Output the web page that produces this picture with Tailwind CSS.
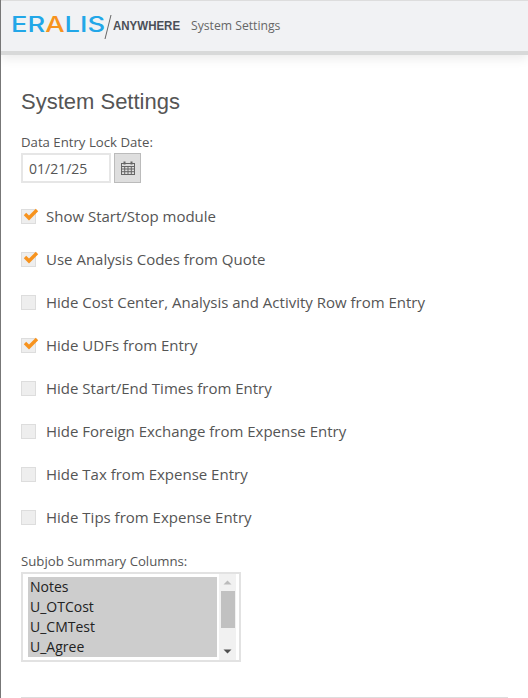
<!DOCTYPE html>
<html lang="en">
<head>
  <meta charset="UTF-8" />
  <meta name="viewport" content="width=device-width, initial-scale=1.0"/>
  <title>System Settings</title>
  <script src="https://cdn.jsdelivr.net/npm/@tailwindcss/browser@4"></script>
</head>
<body class="bg-white h-[698px] overflow-hidden border-l border-[#777] font-['Open_Sans',sans-serif] text-[#555]">
  <!-- header -->
  <header class="h-[55px] bg-[#f1f2f4] border-t border-[#ddd] border-b-[4px] border-b-[#d8d9d9] shadow-[0_4px_10px_rgba(0,0,0,0.08)] flex items-center pl-[10px]">
    <span class="font-['Inter',sans-serif] text-[21px] leading-none font-medium text-[#22a7e8] w-[93px] -mt-[4px] scale-x-[1.3] origin-left">ER<span class="text-[#f7931e]">A</span>LIS</span>
    <svg class="w-[8px] h-[24px] mt-[1px]" viewBox="0 0 8 24"><path d="M7 0 L1 24" stroke="#666" stroke-width="1" fill="none"/></svg>
    <span class="font-['Liberation_Sans',sans-serif] text-[12.5px] font-bold text-[#4a4f57] mt-[1px] ml-[1px] w-[70px] scale-x-[0.92] origin-left">ANYWHERE</span>
    <span class="text-[12.2px] text-[#666] ml-[8px] mt-[1px]">System Settings</span>
  </header>

  <main class="px-5">
    <h2 class="font-['Liberation_Sans',sans-serif] text-[22px] leading-[26px] text-[#555] mt-[34px]">System Settings</h2>

    <label class="block text-[13.2px] leading-[16px] mt-[19px]">Data Entry Lock Date:</label>
    <div class="flex mt-[3px] gap-[3px]">
      <input type="text" value="01/21/25" class="w-[90px] h-[30px] border-2 border-[#e6e6e6] px-[6px] text-[14px] text-[#555] outline-none"/>
      <button class="w-[27px] h-[30px] bg-[#dedede] border border-[#bbb] flex items-center justify-center">
        <svg class="w-[14px] h-[14px]" viewBox="0 0 14 14" fill="none" stroke="#666">
          <rect x="0.5" y="2.5" width="13" height="11" fill="#dedede"/>
          <path d="M0.5 5.5H13.5M0.5 8H13.5M0.5 10.7H13.5M3.7 5V13.5M7 5V13.5M10.3 5V13.5"/>
          <path d="M3.5 0.5V3.5M10.5 0.5V3.5" stroke-width="2"/>
        </svg>
      </button>
    </div>

    <div class="flex flex-col gap-[21px] mt-[22px] text-[15px] leading-[22px]">
      <div class="flex items-center gap-[10px]">
        <span class="relative w-[15px] h-[15px] bg-[#eee] border border-[#ddd]">
          <svg class="absolute -top-[3px] left-[1px] w-[16px] h-[14px]" viewBox="0 0 16 14" fill="none"><path d="M2 7L6 11L14 3" stroke="#f7931e" stroke-width="3.4"/></svg>
        </span>
        <span>Show Start/Stop module</span>
      </div>
      <div class="flex items-center gap-[10px]">
        <span class="relative w-[15px] h-[15px] bg-[#eee] border border-[#ddd]">
          <svg class="absolute -top-[3px] left-[1px] w-[16px] h-[14px]" viewBox="0 0 16 14" fill="none"><path d="M2 7L6 11L14 3" stroke="#f7931e" stroke-width="3.4"/></svg>
        </span>
        <span>Use Analysis Codes from Quote</span>
      </div>
      <div class="flex items-center gap-[10px]">
        <span class="w-[15px] h-[15px] bg-[#eee] border border-[#ddd]"></span>
        <span>Hide Cost Center, Analysis and Activity Row from Entry</span>
      </div>
      <div class="flex items-center gap-[10px]">
        <span class="relative w-[15px] h-[15px] bg-[#eee] border border-[#ddd]">
          <svg class="absolute -top-[3px] left-[1px] w-[16px] h-[14px]" viewBox="0 0 16 14" fill="none"><path d="M2 7L6 11L14 3" stroke="#f7931e" stroke-width="3.4"/></svg>
        </span>
        <span>Hide UDFs from Entry</span>
      </div>
      <div class="flex items-center gap-[10px]">
        <span class="w-[15px] h-[15px] bg-[#eee] border border-[#ddd]"></span>
        <span>Hide Start/End Times from Entry</span>
      </div>
      <div class="flex items-center gap-[10px]">
        <span class="w-[15px] h-[15px] bg-[#eee] border border-[#ddd]"></span>
        <span>Hide Foreign Exchange from Expense Entry</span>
      </div>
      <div class="flex items-center gap-[10px]">
        <span class="w-[15px] h-[15px] bg-[#eee] border border-[#ddd]"></span>
        <span>Hide Tax from Expense Entry</span>
      </div>
      <div class="flex items-center gap-[10px]">
        <span class="w-[15px] h-[15px] bg-[#eee] border border-[#ddd]"></span>
        <span>Hide Tips from Expense Entry</span>
      </div>
    </div>

    <label class="block text-[13.2px] leading-[16px] mt-[25px]">Subjob Summary Columns:</label>
    <div class="w-[220px] h-[90px] mt-[3px] border-2 border-[#e2e2e2] flex pl-[5px] pt-[3px] pb-[3px]">
      <ul class="w-[189px] bg-[#cdcdcd] text-[14px] leading-[20px] text-[#222] pl-[2px]">
        <li>Notes</li>
        <li>U_OTCost</li>
        <li>U_CMTest</li>
        <li>U_Agree</li>
      </ul>
      <div class="w-[17px] ml-[2px] bg-[#f1f1f1] -my-[3px] flex flex-col items-center">
        <svg class="w-[9px] h-[17px]" viewBox="0 0 9 17"><path d="M0.5 10.5L4.5 6.5L8.5 10.5Z" fill="#bbb"/></svg>
        <div class="w-[14px] h-[37px] bg-[#c1c1c1]"></div>
        <div class="flex-1"></div>
        <svg class="w-[9px] h-[17px]" viewBox="0 0 9 17"><path d="M0.5 6.5L4.5 10.5L8.5 6.5Z" fill="#505050"/></svg>
      </div>
    </div>

    <hr class="border-[#ddd] mt-[35px]"/>
  </main>
</body>
</html>
